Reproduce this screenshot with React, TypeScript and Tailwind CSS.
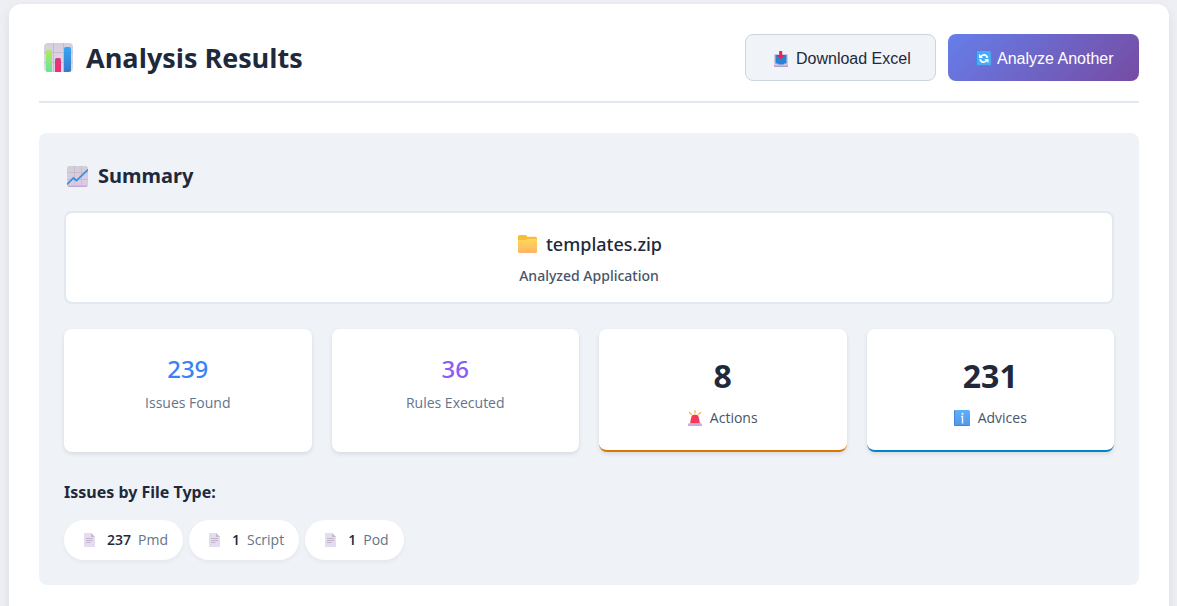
import type { ReactNode } from "react";

function BarChartIcon() {
  return (
    <svg viewBox="0 0 29 29" className="h-[29px] w-[29px]" aria-hidden="true">
      <defs>
        <linearGradient id="paper" x1="0" y1="0" x2="0" y2="1">
          <stop offset="0" stopColor="#d5cedb" />
          <stop offset="1" stopColor="#e3d9ec" />
        </linearGradient>
        <linearGradient id="barGreen" x1="0" y1="0" x2="0" y2="1">
          <stop offset="0" stopColor="#b4e85c" />
          <stop offset="1" stopColor="#62e59a" />
        </linearGradient>
        <linearGradient id="barPink" x1="0" y1="0" x2="0" y2="1">
          <stop offset="0" stopColor="#d83d80" />
          <stop offset="1" stopColor="#f52b70" />
        </linearGradient>
        <linearGradient id="barBlue" x1="0" y1="0" x2="0" y2="1">
          <stop offset="0" stopColor="#38a5f6" />
          <stop offset="1" stopColor="#367bc9" />
        </linearGradient>
      </defs>
      <rect width="29" height="29" rx="4" fill="url(#paper)" />
      <path d="M9.500 0v29M19.500 0v29M0 9.500h29M0 19.500h29" stroke="#c3bacc" strokeWidth="1" />
      <path d="M2 8.500q0-1.500 1.500-1.500h3q1.500 0 1.500 1.500V29H4q-2 0-2-1.500z" fill="url(#barGreen)" />
      <path d="M11 16.500q0-1.500 1.500-1.500h3q1.500 0 1.500 1.500V29h-6z" fill="url(#barPink)" />
      <path d="M20 5.500q0-1.500 1.500-1.500h4q1.500 0 1.500 1.500V28q-1 1-2 1h-5z" fill="url(#barBlue)" />
    </svg>
  );
}

function TrendIcon() {
  return (
    <svg viewBox="0 0 21 21" className="h-[21px] w-[21px]" aria-hidden="true">
      <defs>
        <linearGradient id="trendPaper" x1="0" y1="0" x2="0" y2="1">
          <stop offset="0" stopColor="#d3cfd8" />
          <stop offset="0.900" stopColor="#dacbe6" />
          <stop offset="1" stopColor="#b99bcb" />
        </linearGradient>
      </defs>
      <rect width="21" height="21" rx="2.500" fill="url(#trendPaper)" />
      <path d="M7.500 0v20M14.500 0v20M0 6.500h21M0 13.500h21" stroke="#c4bacd" strokeWidth="0.800" />
      <path d="M0 18.500l6.500-6.500 3 2.500L21 3.500" fill="none" stroke="#3590dc" strokeWidth="1.700" />
    </svg>
  );
}

function InboxIcon() {
  return (
    <svg viewBox="0 0 14 16" className="h-4 w-[14px]" aria-hidden="true">
      <path d="M0 4q0-1 1-1h12q1 0 1 1v11q0 1-1 1H1q-1 0-1-1z" fill="#d4c9df" />
      <path d="M1.500 4h11v8.500h-2l-1 1h-5l-1-1h-2z" fill="#2684d8" />
      <path d="M0 14.500h14V15q0 1-1 1H1q-1 0-1-1z" fill="#b79fca" />
      <path d="M5.200 0h3v4h2.500L6.700 8.200 2.700 4h2.500z" fill="#dc2958" />
    </svg>
  );
}

function RefreshIcon() {
  return (
    <svg viewBox="0 0 15 15" className="h-[15px] w-[15px]" aria-hidden="true">
      <rect width="15" height="15" rx="1.500" fill="#4babf6" />
      <path d="M0 1.500Q0 0 .8 0v14.200H15Q15 15 13.500 15h-12Q0 15 0 13.500z" fill="#3483e1" />
      <path d="M5 5.500Q7.500 2.800 10 4.500q1.300 1 1.300 2.500M10.500 9.500Q8 12.200 5.500 10.500q-1.300-1-1.300-2.500" fill="none" stroke="#fff" strokeWidth="1.700" />
      <path d="M3 3v4h4zM12.500 12V8h-4z" fill="#fff" />
    </svg>
  );
}

function FolderIcon() {
  return (
    <svg viewBox="0 0 19 18" className="h-[18px] w-[19px]" aria-hidden="true">
      <defs>
        <linearGradient id="folderFront" x1="0" y1="0" x2="0" y2="1">
          <stop offset="0" stopColor="#ffd955" />
          <stop offset="1" stopColor="#feb466" />
        </linearGradient>
      </defs>
      <path d="M0 1.500Q0 0 1.500 0h5.800q.7 0 1.200.6L9.500 1.800h8q1.500 0 1.500 1.500V16H0z" fill="#f8bb3c" />
      <path d="M0 6q0-1 1-1h6q.7 0 1.200-.4l.5-.3Q9.200 4 9.800 4H18q1 0 1 1v11.500q0 1.500-1.500 1.500h-16Q0 18 0 16.500z" fill="url(#folderFront)" />
    </svg>
  );
}

function SirenIcon() {
  return (
    <svg viewBox="0 0 14 16" className="h-4 w-[14px]" aria-hidden="true">
      <defs>
        <linearGradient id="siren" x1="0" y1="0" x2="1" y2="0">
          <stop offset="0" stopColor="#fb3b45" />
          <stop offset="1" stopColor="#ee376f" />
        </linearGradient>
      </defs>
      <path d="M7 .7v2.300M1.500 2.500l2 2M12.500 2.500l-2 2" stroke="#f6b94a" strokeWidth="1.300" strokeLinecap="round" />
      <path d="M2 13.500L3.300 7Q3.800 4.800 6 4.800h2q2.200 0 2.700 2.200L12 13.500z" fill="url(#siren)" />
      <path d="M0 14.500q0-1.200 1.200-1.200h11.600q1.200 0 1.200 1.200V16H0z" fill="#c8addf" />
    </svg>
  );
}

function InfoIcon() {
  return (
    <svg viewBox="0 0 16 16" className="h-4 w-4" aria-hidden="true">
      <defs>
        <linearGradient id="info" x1="0" y1="0" x2="0" y2="1">
          <stop offset="0" stopColor="#5cb0fb" />
          <stop offset="1" stopColor="#5596ea" />
        </linearGradient>
      </defs>
      <rect width="16" height="16" rx="1.500" fill="url(#info)" />
      <path d="M0 1.500Q0 0 1 0v15h15q0 1-1.500 1h-13Q0 16 0 14.500z" fill="#4384dc" />
      <circle cx="8.500" cy="3.800" r="1.100" fill="#e4f2ff" />
      <path d="M7 6.500h1.500V13.500" fill="none" stroke="#e4f2ff" strokeWidth="1.500" />
    </svg>
  );
}

function DocumentIcon() {
  return (
    <svg viewBox="0 0 11 14" className="h-[14px] w-[11px]" aria-hidden="true">
      <path d="M0 .5Q0 0 .5 0H7l4 4v9.500q0 .5-.5.500H.5Q0 14 0 13.500z" fill="#e5dcf0" />
      <path d="M7 0l4 4H7.500Q7 4 7 3.500z" fill="#c5b9cf" />
      <path d="M2 5.500h7M2 7.500h7M2 9.500h4.500" stroke="#b7a9c2" strokeWidth="0.800" />
    </svg>
  );
}

const card = "flex flex-col items-center rounded-lg bg-white shadow-[0_2px_4px_rgba(0,0,0,0.1)]";

function Stat({ value, label, color }: { value: string; label: string; color: string }) {
  return (
    <div className={`${card} h-[123px] pt-6`}>
      <div className={`text-2xl font-medium ${color}`}>{value}</div>
      <div className="mt-2 font-['Open_Sans',sans-serif] text-sm font-medium text-[#64748b]">{label}</div>
    </div>
  );
}

function Severity({ value, label, icon, border }: { value: string; label: string; icon: ReactNode; border: string }) {
  return (
    <div className={`${card} h-[123px] border-b-2 pt-[27px] ${border}`}>
      <div className="text-[32px] leading-10 font-bold text-[#1e293b]">{value}</div>
      <div className="mt-3 flex items-center gap-2 font-['Open_Sans',sans-serif] text-sm text-[#475569]">
        {icon}
        <span>{label}</span>
      </div>
    </div>
  );
}

const fileTypes = [
  { count: 237, name: "Pmd" },
  { count: 1, name: "Script" },
  { count: 1, name: "Pod" },
];

export default function App() {
  return (
    <div className="min-h-screen bg-[#eeeef5] pt-1 pr-2 pl-[9px] font-['Noto_Sans',sans-serif] text-[#1e293b]">
      <main className="rounded-t-xl bg-white p-[30px] shadow-[0_4px_12px_rgba(0,0,0,0.08)]">
        <header className="flex items-center justify-between border-b-2 border-[#e2e8f0] pb-5">
          <h1 className="flex items-center gap-[13px] pl-[5px] text-[27px] leading-10 font-bold">
            <BarChartIcon />
            <span className="font-['Open_Sans',sans-serif]">Analysis Results</span>
          </h1>
          <div className="flex gap-3 font-['Liberation_Sans',sans-serif] text-base">
            <button type="button" className="flex h-[47px] w-[191px] items-center gap-2 rounded-lg border border-[#cbd5e1] bg-[#f0f3f8] pt-[2px] pl-7">
              <InboxIcon />
              Download Excel
            </button>
            <button type="button" className="flex h-[47px] w-[191px] items-center gap-[6px] rounded-lg bg-[linear-gradient(135deg,#667eea_0%,#764ba2_100%)] pt-[2px] pl-7 text-white">
              <RefreshIcon />
              Analyze Another
            </button>
          </div>
        </header>

        <section className="mt-[30px] rounded-lg bg-[#eff3f8] p-[25px]">
          <h2 className="flex items-center gap-[10px] pl-[3px] text-xl leading-9 font-bold">
            <TrendIcon />
            Summary
          </h2>

          <div className="mt-[17px] flex h-[93px] flex-col items-center rounded-lg border-2 border-[#e2e8f0] bg-white pt-[17px]">
            <div className="flex items-center gap-[9px] pl-[2px] text-lg leading-7 font-medium">
              <FolderIcon />
              templates.zip
            </div>
            <div className="mt-2 text-sm font-medium text-[#475569]">Analyzed Application</div>
          </div>

          <div className="mt-[25px] grid grid-cols-4 gap-5">
            <Stat value="239" label="Issues Found" color="text-[#3b82f6]" />
            <Stat value="36" label="Rules Executed" color="text-[#8b5cf6]" />
            <Severity value="8" label="Actions" icon={<SirenIcon />} border="border-[#d97706]" />
            <Severity value="231" label="Advices" icon={<InfoIcon />} border="border-[#0284c7]" />
          </div>

          <h3 className="mt-7 text-base leading-6 font-bold">Issues by File Type:</h3>
          <ul className="mt-4 flex flex-wrap gap-[6px]">
            {fileTypes.map(({ count, name }) => (
              <li key={name} className="flex h-10 items-center rounded-full bg-white pr-[15px] pl-5 font-['Open_Sans',sans-serif] text-sm shadow-[0_2px_4px_rgba(0,0,0,0.05)]">
                <DocumentIcon />
                <span className="ml-3 font-semibold">{count}</span>
                <span className="ml-[7px] text-[#64748b]">{name}</span>
              </li>
            ))}
          </ul>
        </section>
      </main>
    </div>
  );
}
